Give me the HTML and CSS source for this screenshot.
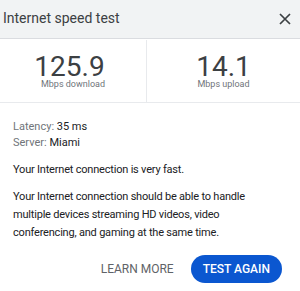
FILE: index.html
```html
<!DOCTYPE html>
<html>
<head>
<meta charset="utf-8">
<link rel="stylesheet" href="styles.css">
</head>
<body>
<div class="card">
  <div class="header">
    <span class="title">Internet speed test</span>
    <svg class="close" width="12" height="12" viewBox="0 0 12 12"><path d="M1 1L11 11M11 1L1 11" stroke="#3c4043" stroke-width="1.7" fill="none"/></svg>
  </div>
  <div class="stats">
    <div class="stat">
      <div class="num num-down">125.9</div>
      <div class="unit">Mbps download</div>
    </div>
    <div class="stat">
      <div class="num">14.1</div>
      <div class="unit">Mbps upload</div>
    </div>
  </div>
  <div class="body">
    <div class="meta">
      <div><span class="label">Latency:</span> 35 ms</div>
      <div><span class="label">Server:</span> Miami</div>
    </div>
    <p class="msg">Your Internet connection is very fast.</p>
    <p class="msg">Your Internet connection should be able to handle multiple devices streaming HD videos, video conferencing, and gaming at the same time.</p>
    <div class="actions">
      <button class="learn">LEARN MORE</button>
      <button class="again">TEST AGAIN</button>
    </div>
  </div>
</div>
</body>
</html>
```
FILE: styles.css
```css
html, body { margin: 0; padding: 0; background: #fff; }
body { font-family: Roboto, "Noto Sans", sans-serif; color: #202124; width: 300px; }
.header {
  height: 39px;
  box-sizing: border-box;
  background: #f1f3f4;
  border-bottom: 1px solid #dadce0;
  display: flex;
  align-items: center;
  justify-content: space-between;
  padding: 0 9px 2px 3px;
}
.title { font-size: 14px; color: #3c4043; }
.close { margin-top: 1px; }
.stats {
  display: grid;
  grid-template-columns: 147px 1fr;
  border-bottom: 1px solid #e8eaed;
  height: 62px;
  margin-top: 1px;
}
.stat { text-align: center; padding-top: 15px; }
.stat:first-child { border-right: 1px solid #e8eaed; }
.num { font-size: 28px; line-height: 24px; color: #3c4043; }
.num-down { padding-right: 7px; }
.unit { font-size: 9px; line-height: 10px; color: #70757a; }
.body { padding: 16px 13px 0 13px; }
.meta { font-size: 11px; line-height: 15.5px; color: #202124; }
.label { color: #70757a; }
.msg { font-size: 11px; letter-spacing: -0.2px; line-height: 18px; margin: 11px 0 0 0; color: #202124; max-width: 258px; }
.msg + .msg { margin-top: 9px; }
.actions { display: flex; justify-content: flex-end; align-items: center; gap: 17px; margin-top: 12.75px; padding-right: 5px; }
button { font-family: Roboto, sans-serif; font-size: 12px; border: none; cursor: pointer; }
.learn { background: none; color: #5f6368; padding: 0; }
.again { background: #0b57d0; color: #fff; font-weight: 500; height: 28px; border-radius: 14px; padding: 0 12px; }
```
